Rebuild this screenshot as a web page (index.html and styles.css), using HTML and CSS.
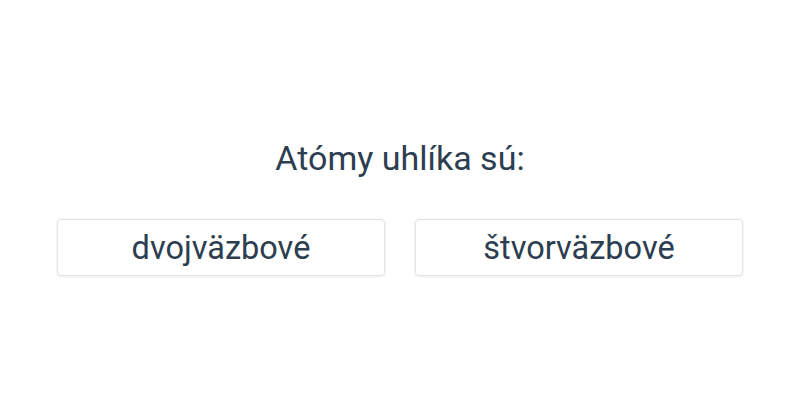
FILE: index.html
```html
<!DOCTYPE html>
<html lang="sk">
<head>
<meta charset="utf-8">
<link rel="stylesheet" href="styles.css">
</head>
<body>
<main class="quiz">
  <h1 class="question">Atómy uhlíka sú:</h1>
  <div class="options">
    <button class="option">dvojväzbové</button>
    <button class="option">štvorväzbové</button>
  </div>
</main>
</body>
</html>
```
FILE: styles.css
```css
html, body {
  margin: 0;
  padding: 0;
  background: #ffffff;
}
body {
  width: 800px;
  height: 400px;
  font-family: Roboto, "Noto Sans", sans-serif;
  color: #2c3e50;
}
.quiz {
  display: flex;
  flex-direction: column;
  align-items: center;
  padding-top: 136px;
}
.question {
  margin: 0;
  font-size: 34px;
  font-weight: 400;
  line-height: 44px;
}
.options {
  display: flex;
  gap: 30px;
  margin-top: 39px;
}
.option {
  width: 328px;
  height: 57px;
  background: #ffffff;
  border: 1px solid #e2e2e2;
  border-radius: 4px;
  box-shadow: 0 1px 3px rgba(0,0,0,0.08);
  font-family: Roboto, "Noto Sans", sans-serif;
  font-size: 32.5px;
  color: #2c3e50;
  padding: 0;
}
```
